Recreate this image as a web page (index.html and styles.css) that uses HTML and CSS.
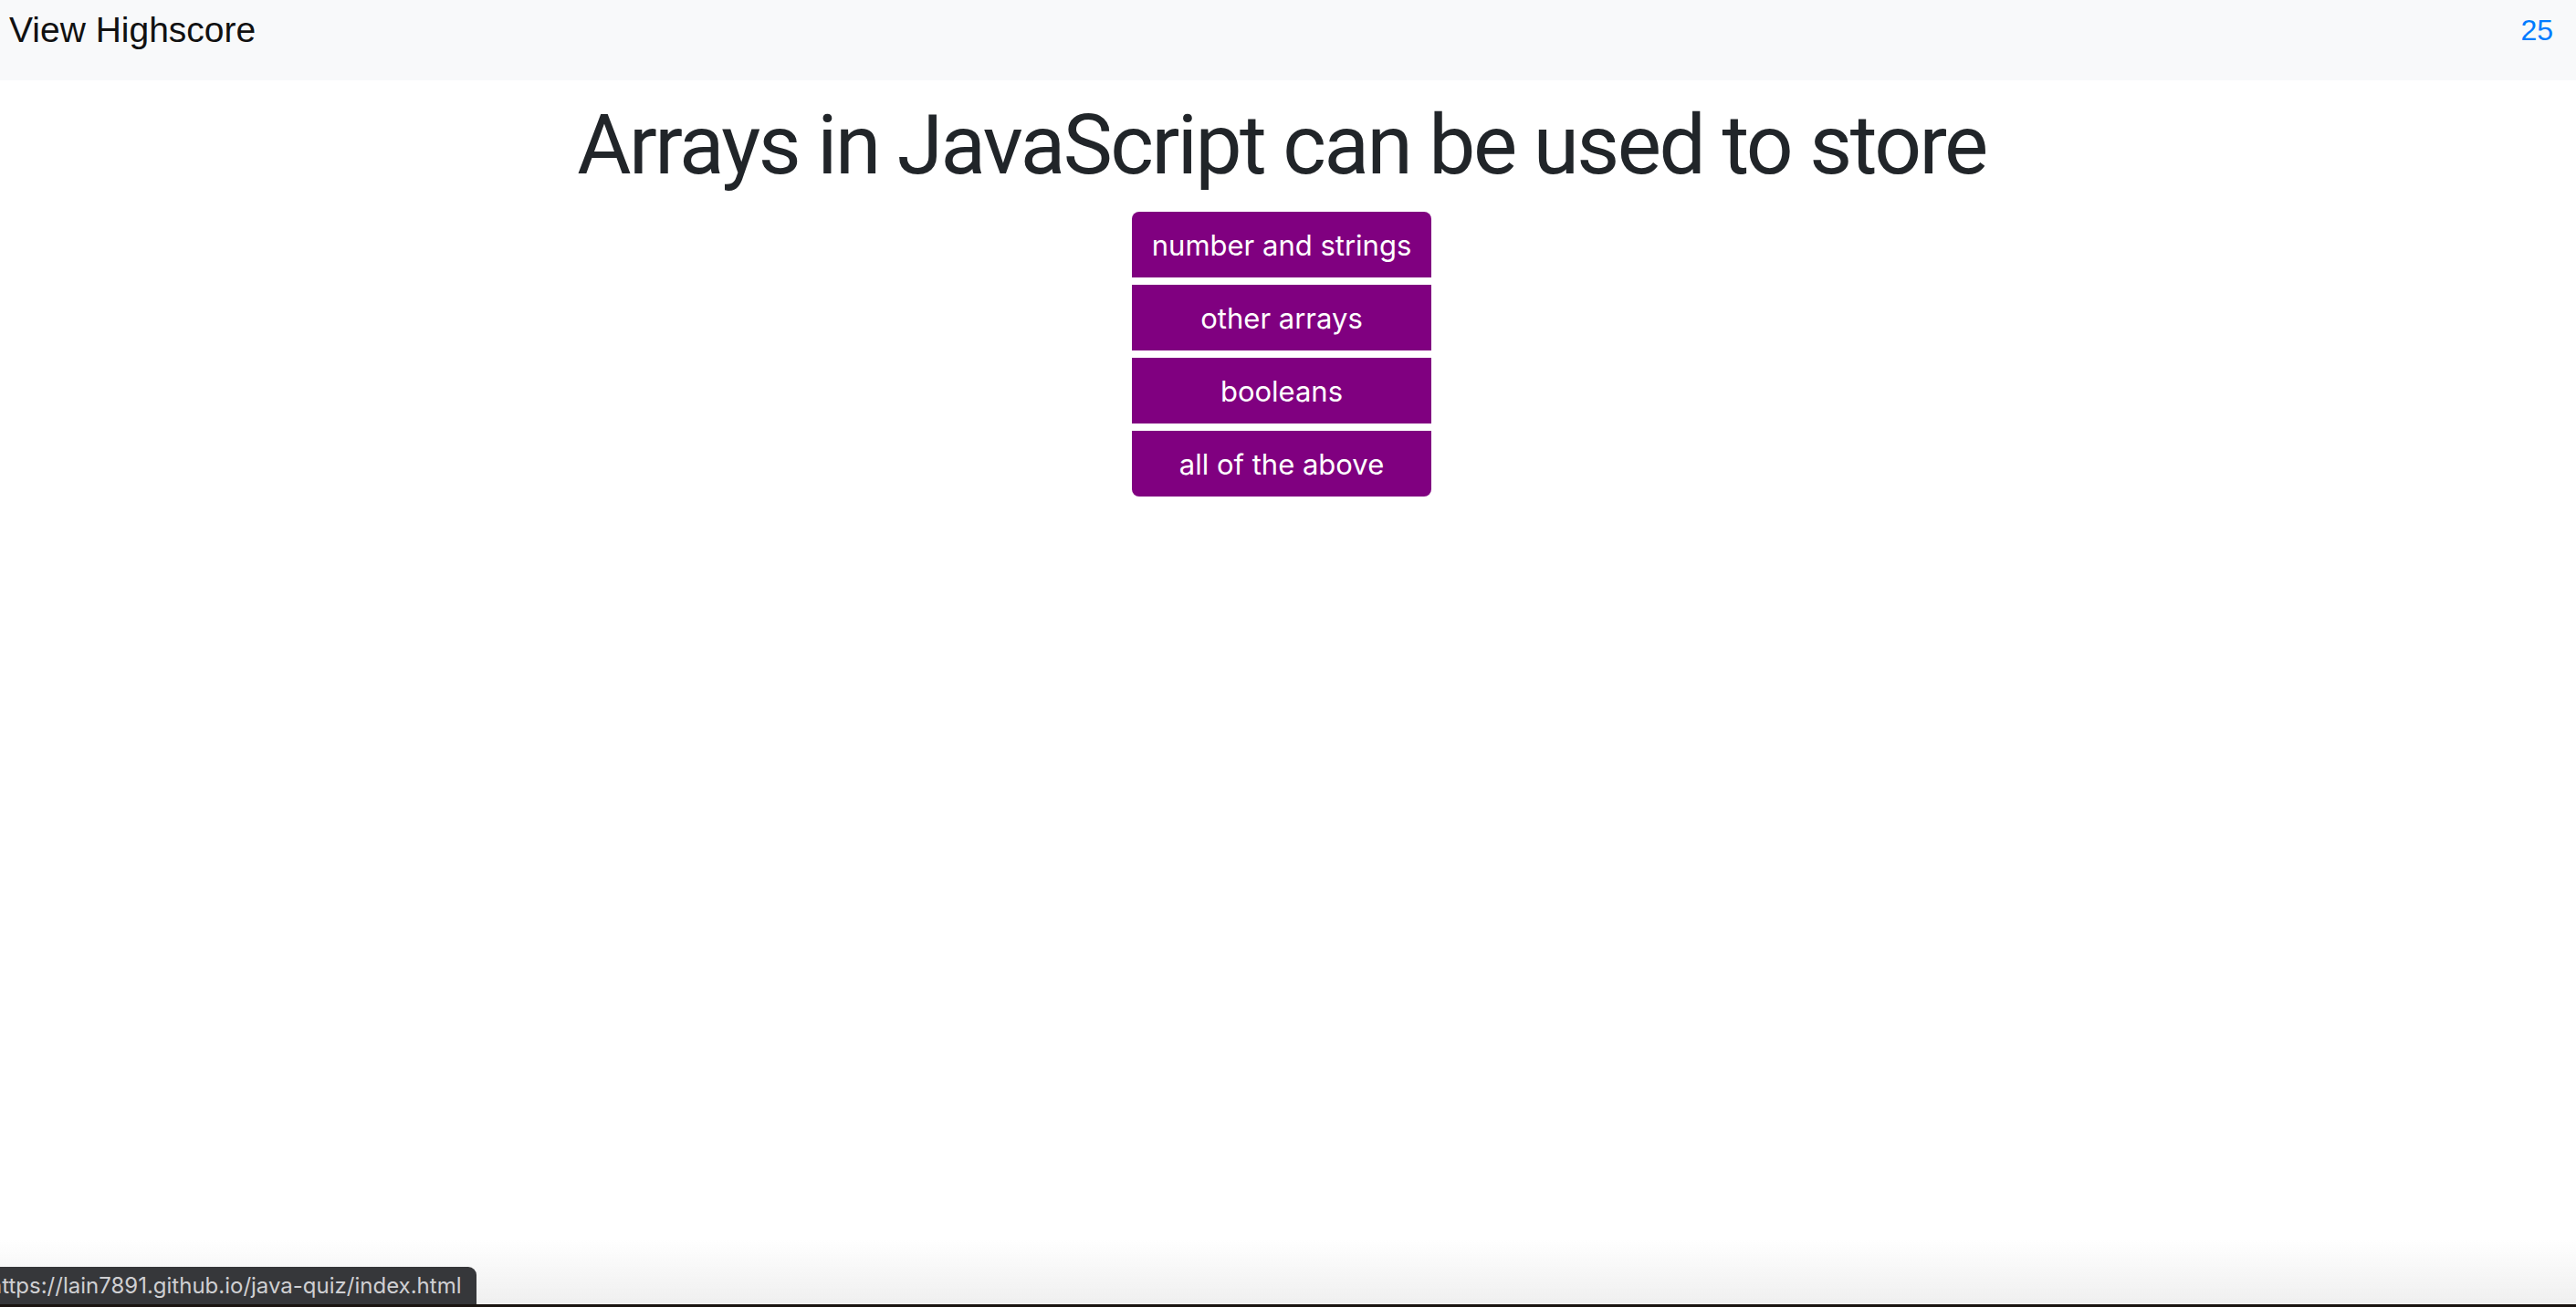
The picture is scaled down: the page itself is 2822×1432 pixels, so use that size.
FILE: index.html
```html
<!DOCTYPE html>
<html lang="en">
<head>
<meta charset="utf-8">
<title>Java Quiz</title>
<link rel="stylesheet" href="styles.css">
</head>
<body>
<nav class="navbar">
  <a class="brand" href="#">View Highscore</a>
  <span class="score">25</span>
</nav>
<main class="quiz">
  <h1 class="question">Arrays in JavaScript can be used to store</h1>
  <div class="answers">
    <button class="answer">number and strings</button>
    <button class="answer">other arrays</button>
    <button class="answer">booleans</button>
    <button class="answer">all of the above</button>
  </div>
</main>
<div class="bottom-fade"></div>
<div class="status-url">https://lain7891.github.io/java-quiz/index.html</div>
<div class="bottom-edge"></div>
</body>
</html>
```

FILE: styles.css
```css
html, body {
  margin: 0;
  padding: 0;
  background: #ffffff;
  height: 100%;
  overflow: hidden;
}
body {
  font-family: "Liberation Sans", Arial, sans-serif;
  color: #212529;
}
.navbar {
  height: 88px;
  box-sizing: border-box;
  background: #f8f9fa;
  display: flex;
  justify-content: space-between;
  align-items: flex-start;
  padding: 3px 25px 0 10px;
}
.brand {
  font-size: 39px;
  line-height: 60px;
  color: #111;
  text-decoration: none;
}
.score {
  font-size: 32px;
  line-height: 48px;
  color: #007bff;
  margin-top: 6px;
}
.quiz {
  display: flex;
  flex-direction: column;
  align-items: center;
  padding-right: 14px;
}
.question {
  font-family: Roboto, "Liberation Sans", sans-serif;
  font-weight: 400;
  font-size: 91px;
  line-height: 110px;
  letter-spacing: -2.5px;
  margin: 16px 0 0 0;
  color: #212529;
}
.answers {
  display: flex;
  flex-direction: column;
  gap: 8px;
  width: 328px;
  margin-top: 18px;
}
.answer {
  height: 72px;
  border: none;
  background: #800080;
  color: #ffffff;
  font-family: Inter, "Open Sans", sans-serif;
  font-size: 31px;
  padding: 0;
  border-radius: 0;
}
.answer:first-child {
  border-radius: 8px 8px 0 0;
}
.answer:last-child {
  border-radius: 0 0 8px 8px;
}
.bottom-fade {
  position: fixed;
  left: 0;
  right: 0;
  bottom: 3px;
  height: 72px;
  background: linear-gradient(to bottom, rgba(240,240,240,0), #efefef);
}
.status-url {
  position: fixed;
  left: -12px;
  bottom: 3px;
  width: max-content;
  height: 41px;
  box-sizing: border-box;
  background: #36373a;
  color: #cfcfd2;
  font-family: Inter, "Liberation Sans", sans-serif;
  font-size: 24px;
  line-height: 41px;
  padding: 0 16px 0 0;
  border-radius: 0 9px 0 0;
  white-space: nowrap;
}
.bottom-edge {
  position: fixed;
  left: 0;
  right: 0;
  bottom: 0;
  height: 3px;
  background: #1a1410;
}
```
